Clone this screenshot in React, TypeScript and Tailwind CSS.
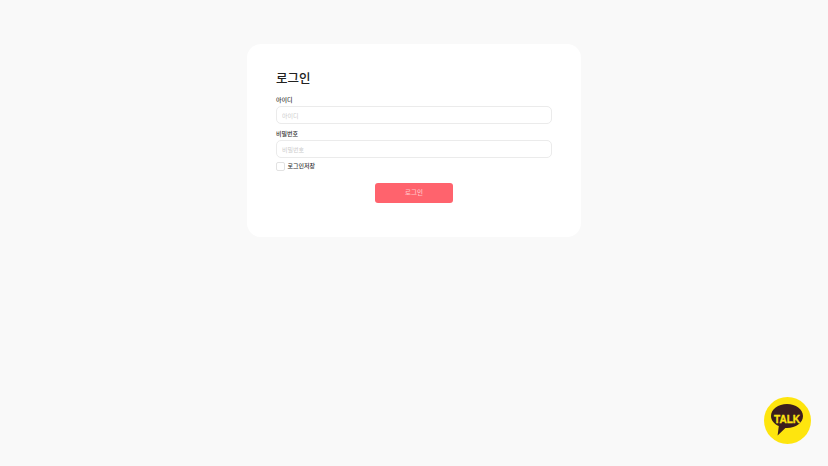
const font = { fontFamily: '"Noto Sans CJK KR", "Noto Sans", sans-serif' };

const Field = ({ label, id }: { label: string; id: string }) => (
  <div className="flex flex-col">
    <label htmlFor={id} className="text-[6px] leading-[12px] font-medium text-[#333333]">
      {label}
    </label>
    <input
      id={id}
      type="text"
      placeholder={label}
      className="w-full h-[18px] rounded-[5px] border border-[#ebebeb] bg-white px-[5px] text-[6px] outline-none placeholder:text-[#cccccc]"
    />
  </div>
);

const KakaoTalk = () => (
  <svg viewBox="0 0 47 47" className="w-[47px] h-[47px]">
    <circle cx="23.5" cy="23.5" r="23.5" fill="#fee50e" />
    <path d="M23 7C14.2 7 7 12.4 7 19c0 4.3 3 8 7.8 10.1L13.6 38.5l7.8-7.6c.5.1 1 .1 1.6.1 8.8 0 16-5.4 16-12S31.8 7 23 7z" fill="#3b1e1e" />
    <text x="23" y="26" textAnchor="middle" fontSize="11" fontWeight="700" textLength="26" lengthAdjust="spacingAndGlyphs" stroke="#fee50e" strokeWidth="0.35" fill="#fee50e" fontFamily="'Liberation Sans', sans-serif">TALK</text>
  </svg>
);

export default function App() {
  return (
    <div style={font} className="relative h-[466px] overflow-hidden bg-[#f9f9f9] pt-[44px]">
      <div className="mx-auto w-[334px] h-[193px] rounded-[14px] bg-white px-[29px] pt-[26px]">
        <h1 className="text-[12.5px] leading-[16px] font-medium text-[#222222] mb-[8px]">로그인</h1>
        <div className="flex flex-col gap-[4px]">
          <Field label="아이디" id="userid" />
          <Field label="비밀번호" id="password" />
        </div>
        <label className="mt-[4px] flex items-center gap-[3px]">
          <span className="w-[8.5px] h-[8.5px] rounded-[2px] border border-[#e2e2e2] bg-white" />
          <span className="text-[6px] leading-[8.5px] font-medium text-[#333333]">로그인저장</span>
        </label>
        <div className="mt-[12.5px] flex justify-center">
          <button
            type="button"
            className="w-[78px] h-[19.5px] rounded-[3px] bg-[#ff636d] text-[6.5px] font-medium text-[#ffc2c6]"
          >
            로그인
          </button>
        </div>
      </div>
      <div className="absolute left-[764px] top-[397px]">
        <KakaoTalk />
      </div>
    </div>
  );
}
